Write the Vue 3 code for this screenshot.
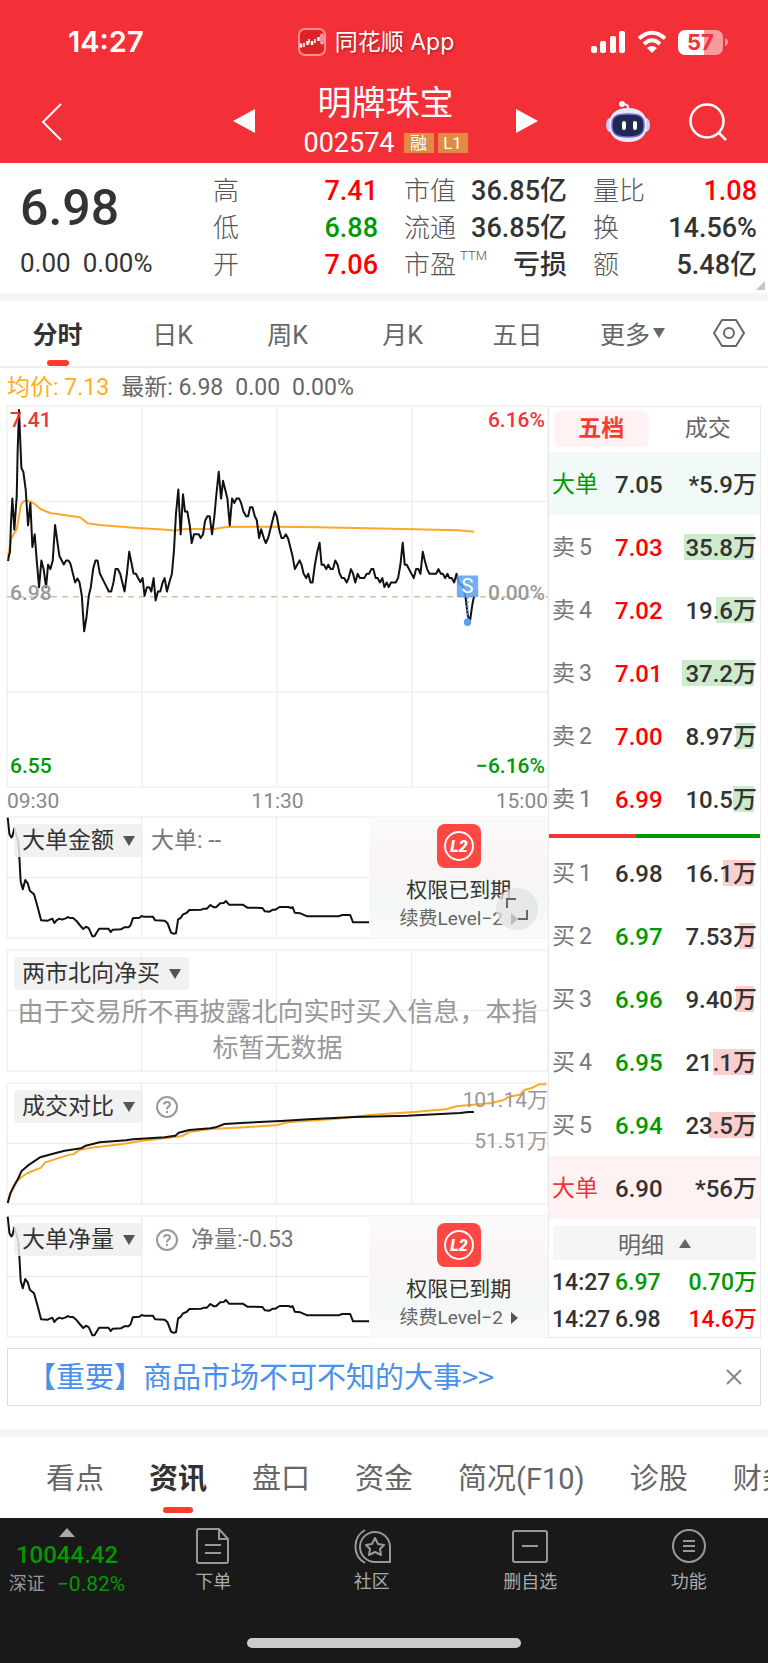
<script setup>
    import { ref } from 'vue'

    const stats = [
        [
            { label: '高', value: '7.41', tone: 'up' },
            { label: '低', value: '6.88', tone: 'down' },
            { label: '开', value: '7.06', tone: 'up' }
        ],
        [
            { label: '市值', value: '36.85亿' },
            { label: '流通', value: '36.85亿' },
            { label: '市盈', sup: 'TTM', value: '亏损' }
        ],
        [
            { label: '量比', value: '1.08', tone: 'up' },
            { label: '换', value: '14.56%' },
            { label: '额', value: '5.48亿' }
        ]
    ]

    const periods = ['分时', '日K', '周K', '月K', '五日']
    const activePeriod = ref('分时')

    // bar - ширина полосы объема в пикселях
    const sells = [
        { name: '卖', level: 5, price: '7.03', qty: '35.8万', bar: 70 },
        { name: '卖', level: 4, price: '7.02', qty: '19.6万', bar: 38 },
        { name: '卖', level: 3, price: '7.01', qty: '37.2万', bar: 72 },
        { name: '卖', level: 2, price: '7.00', qty: '8.97万', bar: 18 },
        { name: '卖', level: 1, price: '6.99', qty: '10.5万', bar: 21 }
    ]
    const buys = [
        { name: '买', level: 1, price: '6.98', qty: '16.1万', bar: 31, tone: 'flat' },
        { name: '买', level: 2, price: '6.97', qty: '7.53万', bar: 15, tone: 'down' },
        { name: '买', level: 3, price: '6.96', qty: '9.40万', bar: 18, tone: 'down' },
        { name: '买', level: 4, price: '6.95', qty: '21.1万', bar: 41, tone: 'down' },
        { name: '买', level: 5, price: '6.94', qty: '23.5万', bar: 45, tone: 'down' }
    ]
    const deals = [
        { time: '14:27', price: '6.97', priceTone: 'down', qty: '0.70万', qtyTone: 'down' },
        { time: '14:27', price: '6.98', priceTone: 'flat', qty: '14.6万', qtyTone: 'up' }
    ]

    const panels = [
        { id: 'amount', title: '大单金额', info: '大单: --', locked: true, expand: true },
        { id: 'north', title: '两市北向净买', empty: '由于交易所不再披露北向实时买入信息，本指标暂无数据' },
        { id: 'compare', title: '成交对比', help: true },
        { id: 'net', title: '大单净量', help: true, info: '净量:-0.53', locked: true }
    ]

    const sections = ['看点', '资讯', '盘口', '资金', '简况(F10)', '诊股', '财务']
    const activeSection = ref('资讯')
    const noticeOpen = ref(true)

    const priceLine = '24,482 27,465 30,455 33,365 37,295 43,388 50,290 53,150 57,30 64,203 70,215 77,268 84,375 91,308 97,440 104,402 110,480 117,560 124,480 131,508 138,560 144,493 151,506 158,480 165,374 172,425 178,467 191,492 198,480 205,480 211,490 225,546 232,534 238,545 245,585 252,692 259,650 266,585 272,560 279,505 286,480 292,480 299,519 312,545 326,573 333,573 340,545 346,506 353,506 360,520 373,573 380,520 387,454 400,519 407,520 420,545 427,533 433,586 440,560 447,560 453,573 460,533 466,600 473,573 480,573 487,546 493,533 500,573 507,546 515,519 521,450 527,340 534,268 541,402 548,282 554,334 561,334 568,374 574,428 581,402 595,402 601,413 608,402 614,362 621,348 628,348 635,402 642,348 648,282 655,215 662,295 668,242 681,295 688,375 695,295 702,308 708,295 716,295 722,308 729,334 737,348 743,348 749,321 756,321 763,348 769,360 776,413 782,387 790,413 796,428 803,413 823,334 829,348 836,388 843,413 849,413 856,402 863,415 876,467 883,506 897,480 903,493 909,519 917,533 923,520 930,546 936,546 943,493 950,455 957,427 963,493 970,493 977,506 983,493 990,506 997,506 1004,480 1011,493 1017,519 1024,533 1031,533 1038,546 1044,533 1051,506 1057,519 1064,546 1071,520 1078,533 1091,533 1098,520 1105,520 1112,506 1118,506 1125,533 1131,533 1138,546 1145,533 1151,560 1158,546 1164,560 1171,546 1185,546 1192,533 1199,493 1206,427 1212,493 1218,493 1239,533 1246,506 1253,506 1259,520 1266,454 1272,480 1279,506 1286,520 1306,520 1313,506 1320,520 1326,520 1333,533 1340,520 1346,533 1353,533 1360,546 1367,520 1373,546 1387,560 1394,590 1401,645 1407,665 1414,615 1420,585'
    const averageLine = '24,470 33,415 50,387 63,312 72,302 90,303 108,314 122,327 150,338 190,344 240,351 262,369 300,374 400,382 500,388 525,391 540,387 570,386 640,386 680,380 830,379 950,381 1100,384 1240,387 1370,390 1420,394'
    const bigOrderLine = '23,533 28,583 33,592 36,590 42,565 53,605 56,650 60,725 66,748 73,720 80,730 86,752 98,763 108,800 118,841 137,842 150,836 156,849 162,841 170,836 178,839 188,835 195,831 200,834 209,834 218,842 228,855 238,867 246,860 254,865 264,889 270,889 283,866 310,866 316,876 322,869 345,868 355,862 367,862 373,855 379,835 398,833 404,828 410,830 436,830 443,841 470,842 478,850 488,878 494,881 502,880 508,838 515,834 522,823 532,819 540,810 574,809 582,806 590,806 600,795 610,802 616,802 628,790 638,789 644,783 653,794 692,794 705,803 748,804 755,814 768,815 778,809 785,809 797,801 822,801 830,804 834,801 840,818 856,820 876,829 965,829 975,825 998,825 1006,847 1054,847'
    const todayVolume = '23,790 30,762 40,740 52,718 62,695 80,678 115,653 160,640 185,633 232,626 245,618 285,608 360,602 380,599 470,593 500,588 510,579 540,571 600,566 615,563 640,553 700,549 800,544 880,539 1010,532 1160,528 1310,520 1335,517 1350,517'
    const lastVolume = '23,790 32,760 50,725 62,712 80,700 118,684 130,668 165,656 200,645 210,644 228,630 260,624 350,613 400,604 500,592 522,588 540,577 600,568 700,563 790,556 820,548 960,537 1060,525 1180,517 1270,509 1300,500 1400,490 1435,481 1450,471 1480,465 1495,450 1515,445 1535,434 1556,434'
</script>

<template>
    <div class="page">
        <header class="header">
            <div class="status">
                <span class="clock">14:27</span>
                <span class="app-name">
                    <svg width="28" height="28" viewBox="0 0 28 28" fill="none" stroke="#fff">
                        <rect x="1" y="1" width="26" height="26" rx="6" fill="#dc2329" stroke="#ff8f8c" stroke-width="2" />
                        <path d="M3 15.500v4M9.500 13v4M14 13v4M20.500 9v4" stroke-width="2.500" />
                        <path d="M6 15v4M11 11v4M17 11v4" stroke-width="1.500" />
                        <rect x="23" y="6" width="2" height="10" rx="1" stroke-width="1" />
                    </svg>
                    同花顺 App
                </span>
                <span class="status-icons">
                    <svg width="35" height="24" viewBox="0 0 35 24" fill="#fff">
                        <rect x="0" y="16" width="6" height="7" rx="2" />
                        <rect x="9" y="11" width="6" height="12" rx="2" />
                        <rect x="19" y="6" width="6" height="17" rx="2" />
                        <rect x="28" y="1" width="6" height="22" rx="2" />
                    </svg>
                    <svg width="30" height="24" viewBox="0 0 30 24" fill="none" stroke="#fff" stroke-width="4">
                        <path d="M2 8.500Q15-3 28 8.500M7 14Q15 6.500 23 14" />
                        <path d="M10 18Q15 14 20 18L15 23Z" fill="#fff" stroke="none" />
                    </svg>
                    <span class="battery">57</span>
                    <svg width="3" height="8" viewBox="0 0 3 8" fill="#f99a9c"><path d="M0 0Q3 1 3 4T0 8Z" /></svg>
                </span>
            </div>
            <div class="title-bar">
                <button class="icon-btn back" aria-label="返回">
                    <svg width="22" height="38" viewBox="0 0 22 38" fill="none" stroke="#fff" stroke-width="2"><path d="M20 1L2 19L20 37" /></svg>
                </button>
                <div class="stock">
                    <button class="icon-btn" aria-label="上一只">
                        <svg width="22" height="24" viewBox="0 0 22 24" fill="#fff"><path d="M22 0V24L0 12Z" /></svg>
                    </button>
                    <div class="stock-name">
                        <h1>明牌珠宝</h1>
                        <div class="stock-code">
                            <span>002574</span>
                            <i class="badge">融</i>
                            <i class="badge">L1</i>
                        </div>
                    </div>
                    <button class="icon-btn" aria-label="下一只">
                        <svg width="22" height="24" viewBox="0 0 22 24" fill="#fff"><path d="M0 0V24L22 12Z" /></svg>
                    </button>
                </div>
                <div class="tools">
                    <button class="icon-btn" aria-label="助手">
                        <svg width="46" height="42" viewBox="0 0 46 42">
                            <path d="M23 8Q24 3 18 3" fill="none" stroke="#eef0fb" stroke-width="2" />
                            <circle cx="17" cy="3" r="3" fill="#f3f4fc" />
                            <ellipse cx="5" cy="24" rx="4" ry="7" fill="#c9d0f3" />
                            <ellipse cx="41" cy="24" rx="4" ry="7" fill="#c9d0f3" />
                            <path d="M23 7C36 7 42 14 42 24S36 41 23 41S4 34 4 24S10 7 23 7Z" fill="#e6e9f8" />
                            <path d="M23 13C36 13 39 16 39 24S36 36 23 36S7 32 7 24S10 13 23 13Z" fill="#20294d" stroke="#7a62e0" stroke-width="1.500" />
                            <rect x="17" y="20" width="4" height="9" rx="2" fill="#fff" />
                            <rect x="28" y="20" width="4" height="9" rx="2" fill="#fff" />
                        </svg>
                    </button>
                    <button class="icon-btn" aria-label="搜索">
                        <svg width="38" height="38" viewBox="0 0 38 38" fill="none" stroke="#fff" stroke-width="2.500"><circle cx="18" cy="18" r="16.500" /><path d="M30 30L37 37" /></svg>
                    </button>
                </div>
            </div>
        </header>

        <section class="quote">
            <div class="last">
                <strong>6.98</strong>
                <p><span>0.00</span><span>0.00%</span></p>
            </div>
            <dl v-for="(column, i) in stats" :key="i">
                <div v-for="item in column" :key="item.label">
                    <dt>{{ item.label }}<sup v-if="item.sup">{{ item.sup }}</sup></dt>
                    <dd :class="item.tone">{{ item.value }}</dd>
                </div>
            </dl>
            <svg class="corner" width="9" height="9" viewBox="0 0 9 9" fill="#c4c4c4"><path d="M9 0V9H0Z" /></svg>
        </section>

        <nav class="periods">
            <button v-for="name in periods" :key="name" :class="{ active: name === activePeriod }" @click="activePeriod = name">{{ name }}</button>
            <button>更多<svg width="12" height="10" viewBox="0 0 12 10" fill="#666"><path d="M0 0H12L6 10Z" /></svg></button>
            <button aria-label="设置">
                <svg width="32" height="28" viewBox="0 0 32 28" fill="none" stroke="#666" stroke-width="2"><path d="M9 1H23L31 14L23 27H9L1 14Z" stroke-linejoin="round" /><circle cx="16" cy="14" r="5" /></svg>
            </button>
        </nav>

        <p class="summary"><span class="avg">均价: 7.13</span><span>最新: 6.98</span><span>0.00</span><span>0.00%</span></p>

        <main class="board">
            <div class="charts">
                <div class="chart">
                    <svg viewBox="21 18 1620 1140" preserveAspectRatio="none" fill="none">
                        <path class="grid" d="M21 18H1641V1158H21ZM425 18V1158M830 18V1158M1234 18V1158M21 303H1641M21 874H1641" />
                        <path class="zero" d="M21 589H1641" />
                        <polyline class="line orange" :points="averageLine" />
                        <polyline class="line" :points="priceLine" />
                        <path class="sell-stem" d="M1400 590V660" />
                        <circle cx="1400" cy="665" r="11" fill="#5b9ff0" />
                        <rect x="1368" y="525" width="64" height="65" rx="3" fill="#5b9ff0" fill-opacity=".85" />
                        <text x="1400" y="578" text-anchor="middle" font-size="60" fill="#fff">S</text>
                    </svg>
                    <span class="mark top up">7.41</span>
                    <span class="mark top right up">6.16%</span>
                    <span class="mark middle">6.98</span>
                    <span class="mark middle right">0.00%</span>
                    <span class="mark bottom down">6.55</span>
                    <span class="mark bottom right down">−6.16%</span>
                </div>
                <div class="times"><span>09:30</span><span>11:30</span><span>15:00</span></div>

                <div class="panels">
                    <section v-for="panel in panels" :key="panel.id" class="panel">
                        <svg v-if="panel.id === 'compare'" class="plot" viewBox="21 430 1540 363" preserveAspectRatio="none" fill="none">
                            <path class="grid" d="M21 430H1561V793H21ZM404 430V793M788 430V793M1172 430V793M21 611H1561" />
                            <polyline class="line orange" :points="lastVolume" />
                            <polyline class="line" :points="todayVolume" />
                        </svg>
                        <svg v-else class="plot" viewBox="21 531 1540 363" preserveAspectRatio="none" fill="none">
                            <path class="grid" d="M21 531H1561V894H21ZM404 531V894M788 531V894M1172 531V894M21 712H1561" />
                            <polyline v-if="panel.locked" class="line" :points="bigOrderLine" />
                        </svg>
                        <div class="panel-head">
                            <button class="chip">{{ panel.title }}<svg width="12" height="10" viewBox="0 0 12 10" fill="#555"><path d="M0 0H12L6 10Z" /></svg></button>
                            <button v-if="panel.help" class="icon-btn" aria-label="说明">
                                <svg width="24" height="24" viewBox="0 0 24 24" fill="none" stroke="#999"><circle cx="12" cy="12" r="10" stroke-width="2" /><path d="M9 9.500Q9 7 12 7T15 9.500Q15 11 13 12Q12 12.500 12 14.500M12 16V18" stroke-width="2" /></svg>
                            </button>
                            <span v-if="panel.info">{{ panel.info }}</span>
                        </div>
                        <p v-if="panel.empty" class="empty">{{ panel.empty }}</p>
                        <template v-if="panel.id === 'compare'">
                            <span class="scale high">101.14万</span>
                            <span class="scale mid">51.51万</span>
                        </template>
                        <div v-if="panel.locked" class="locked">
                            <svg width="44" height="44" viewBox="0 0 44 44">
                                <rect width="44" height="44" rx="8" fill="#ff4743" />
                                <circle cx="22" cy="22" r="14" fill="none" stroke="#fff" stroke-width="2" />
                                <text x="22" y="28" text-anchor="middle" font-size="16" font-weight="900" font-style="italic" fill="#fff">L2</text>
                            </svg>
                            <b>权限已到期</b>
                            <a href="#">续费Level−2 <svg width="7" height="12" viewBox="0 0 7 12" fill="#555"><path d="M0 0L7 6L0 12Z" /></svg></a>
                        </div>
                        <button v-if="panel.expand" class="icon-btn expand" aria-label="展开">
                            <svg width="42" height="42" viewBox="0 0 42 42" fill="none" stroke="#666" stroke-width="2"><path d="M11 20V11H20M31 22V31H22" /></svg>
                        </button>
                    </section>
                </div>
            </div>

            <aside class="book">
                <div class="book-tabs">
                    <button class="active">五档</button>
                    <button>成交</button>
                </div>
                <table class="levels sell">
                    <tbody>
                        <tr class="big">
                            <th scope="row">大单</th>
                            <td>7.05</td>
                            <td>*5.9万</td>
                        </tr>
                        <tr v-for="row in sells" :key="row.level">
                            <th scope="row">{{ row.name }}<span>{{ row.level }}</span></th>
                            <td class="up">{{ row.price }}</td>
                            <td><i class="bar" :style="{ width: row.bar + 'px' }"></i><span>{{ row.qty }}</span></td>
                        </tr>
                    </tbody>
                </table>
                <div class="ratio"></div>
                <table class="levels buy">
                    <tbody>
                        <tr v-for="row in buys" :key="row.level">
                            <th scope="row">{{ row.name }}<span>{{ row.level }}</span></th>
                            <td :class="row.tone">{{ row.price }}</td>
                            <td><i class="bar" :style="{ width: row.bar + 'px' }"></i><span>{{ row.qty }}</span></td>
                        </tr>
                        <tr class="big">
                            <th scope="row">大单</th>
                            <td>6.90</td>
                            <td>*56万</td>
                        </tr>
                    </tbody>
                </table>
                <button class="detail">明细<svg width="12" height="9" viewBox="0 0 12 9" fill="#666"><path d="M6 0L12 9H0Z" /></svg></button>
                <table class="levels deals">
                    <tbody>
                        <tr v-for="deal in deals" :key="deal.price">
                            <th scope="row">{{ deal.time }}</th>
                            <td :class="deal.priceTone">{{ deal.price }}</td>
                            <td :class="deal.qtyTone">{{ deal.qty }}</td>
                        </tr>
                    </tbody>
                </table>
            </aside>
        </main>

        <div v-if="noticeOpen" class="notice">
            <a href="#">【重要】商品市场不可不知的大事&gt;&gt;</a>
            <button class="icon-btn" aria-label="关闭" @click="noticeOpen = false">
                <svg width="16" height="16" viewBox="0 0 16 16" stroke="#888" stroke-width="2"><path d="M1 1L15 15M15 1L1 15" /></svg>
            </button>
        </div>

        <nav class="sections">
            <button v-for="name in sections" :key="name" :class="{ active: name === activeSection }" @click="activeSection = name">{{ name }}</button>
        </nav>

        <footer class="footer">
            <div class="dock">
                <button class="index">
                    <svg width="16" height="9" viewBox="0 0 16 9" fill="#aaa"><path d="M8 0L16 9H0Z" /></svg>
                    <b>10044.42</b>
                    <span>深证<em>−0.82%</em></span>
                </button>
                <button>
                    <svg width="34" height="36" viewBox="0 0 34 36" fill="none" stroke="#999" stroke-width="2"><path d="M1 3Q1 1 3 1H23L32 11V33Q32 35 30 35H3Q1 35 1 33ZM23 1V11H32M9 17H25M9 25H25" /></svg>
                    下单
                </button>
                <button>
                    <svg width="38" height="36" viewBox="0 0 38 36" fill="none" stroke="#999" stroke-width="2"><path d="M37 34H22A15 15 0 1 1 37 19ZM12 2A19 19 0 0 0 12 35" /><path d="M22 10L25 16L31 17L27 21L28 27L22 24L16 27L17 21L13 17L19 16Z" stroke-linejoin="round" /></svg>
                    社区
                </button>
                <button>
                    <svg width="36" height="36" viewBox="0 0 36 36" fill="none" stroke="#999" stroke-width="2"><rect x="1" y="3" width="34" height="31" rx="2" /><path d="M10 18H26" /></svg>
                    删自选
                </button>
                <button>
                    <svg width="34" height="36" viewBox="0 0 34 36" fill="none" stroke="#999" stroke-width="2"><circle cx="17" cy="18" r="16" /><path d="M11 13H23M11 18H23M11 23H23" /></svg>
                    功能
                </button>
            </div>
            <div class="home"></div>
        </footer>
    </div>
</template>

<style>
    body {
        margin: 0;
        background: #fff;
    }
</style>

<style scoped>
    .page {
        overflow: hidden;
        font-family: Roboto, "Noto Sans CJK SC", sans-serif;
        font-size: 24px;
        color: #333;
    }
    .page * {
        box-sizing: border-box;
    }
    button {
        padding: 0;
        border: 0;
        background: none;
        font: inherit;
        color: inherit;
        cursor: pointer;
    }
    a {
        color: inherit;
        text-decoration: none;
    }
    svg {
        display: block;
        flex: none;
    }
    h1, p, dl, dd {
        margin: 0;
    }
    i, em {
        font-style: normal;
    }
    .icon-btn {
        display: flex;
    }
    .up {
        color: #f00;
    }
    .down {
        color: #009900;
    }

    .header {
        background: #f33038;
        color: #fff;
    }
    .status {
        display: grid;
        grid-template-columns: 1fr auto 1fr;
        align-items: center;
        height: 80px;
        padding: 4px 40px 0 24px;
    }
    .clock {
        padding-left: 44px;
        font: 600 29px/40px Inter, sans-serif;
    }
    .app-name {
        display: flex;
        gap: 9px;
        align-items: center;
        font-family: Inter, "Noto Sans CJK SC", sans-serif;
        font-size: 23px;
        line-height: 28px;
        text-shadow: 1px 1px 3px rgba(80, 0, 0, .5);
    }
    .status-icons {
        display: flex;
        gap: 11px;
        align-items: center;
        justify-content: flex-end;
    }
    .battery {
        width: 45px;
        height: 25px;
        margin-right: -9px;
        border-radius: 7px;
        background: linear-gradient(90deg, #fff 57%, #f99a9c 57%);
        font: 700 22px/25px Inter, sans-serif;
        text-align: center;
        color: #f33038;
    }
    .title-bar {
        display: grid;
        grid-template-columns: 1fr auto 1fr;
        height: 83px;
    }
    .back {
        align-items: center;
        padding-left: 41px;
    }
    .stock {
        display: flex;
        gap: 48px;
        align-items: center;
        padding: 0 0 1px 3px;
    }
    .stock-name {
        display: flex;
        flex-direction: column;
        align-items: center;
    }
    h1 {
        font-size: 34px;
        font-weight: 400;
        line-height: 44px;
    }
    .stock-code {
        display: flex;
        gap: 4px;
        align-items: center;
        font-size: 27px;
        line-height: 36px;
    }
    .stock-code span {
        margin-right: 5px;
    }
    .badge {
        width: 30px;
        background: #e08b42;
        font-size: 17px;
        line-height: 20px;
        text-align: center;
    }
    .tools {
        display: flex;
        gap: 38px;
        align-items: center;
        justify-content: flex-end;
        padding-right: 41px;
    }

    .quote {
        position: relative;
        display: grid;
        grid-template-columns: 167fr 165fr 163fr 164fr;
        column-gap: 26px;
        height: 138px;
        padding: 10px 11px 0 20px;
        border-bottom: 8px solid #f5f5f5;
    }
    .last strong {
        display: block;
        font-size: 50px;
        font-weight: 500;
        line-height: 70px;
    }
    .last p {
        display: flex;
        gap: 12px;
        font-size: 26px;
        line-height: 40px;
    }
    .quote dl div {
        display: flex;
        justify-content: space-between;
        height: 37px;
        line-height: 37px;
    }
    .quote dt {
        font-size: 26px;
        font-weight: 300;
        color: #555;
    }
    .quote dd {
        font-size: 27px;
        font-weight: 500;
    }
    .quote sup {
        margin-left: 4px;
        font-size: 13px;
        line-height: 13px;
        vertical-align: 14px;
    }
    .corner {
        position: absolute;
        right: 3px;
        bottom: 3px;
    }

    .periods {
        display: grid;
        grid-template-columns: repeat(6, 115fr) 78fr;
        height: 67px;
        border-bottom: 2px solid #eee;
        font-size: 25px;
        color: #666;
    }
    .periods button {
        position: relative;
        display: flex;
        gap: 3px;
        align-items: center;
        justify-content: center;
        padding-bottom: 2px;
    }
    .periods .active, .sections .active {
        font-weight: 700;
        color: #333;
    }
    .periods .active::after, .sections .active::after {
        content: "";
        position: absolute;
        left: 50%;
        bottom: 0;
        width: 22px;
        height: 6px;
        border-radius: 3px;
        background: #ff3b30;
        transform: translateX(-50%);
    }
    .summary {
        display: flex;
        gap: 12px;
        height: 38px;
        padding-left: 7px;
        font-size: 23px;
        line-height: 40px;
        color: #666;
    }
    .avg {
        color: #fdad18;
    }

    .board {
        display: grid;
        grid-template-columns: 541fr 213fr;
        padding: 0 7px;
    }
    .chart {
        position: relative;
    }
    .chart > svg {
        width: 100%;
        height: 381px;
        overflow: visible;
    }
    .grid {
        stroke: #e9e9e9;
        stroke-width: 1px;
        vector-effect: non-scaling-stroke;
    }
    .zero {
        stroke: #c9a06c;
        stroke-width: 1px;
        stroke-dasharray: 6px 5px;
        vector-effect: non-scaling-stroke;
    }
    .line {
        stroke: #111;
        stroke-width: 2px;
        stroke-linejoin: round;
        vector-effect: non-scaling-stroke;
    }
    .orange {
        stroke: #ffa726;
    }
    .sell-stem {
        stroke: #5b9ff0;
        stroke-width: 2px;
        stroke-dasharray: 2px 2px;
        vector-effect: non-scaling-stroke;
    }
    .mark {
        position: absolute;
        left: 3px;
        font-size: 21px;
        font-weight: 500;
        line-height: 24px;
    }
    .mark.right {
        right: 3px;
        left: auto;
    }
    .mark.top {
        top: 2px;
        color: #f03438;
    }
    .mark.middle {
        top: 175px;
        color: #999;
    }
    .mark.bottom {
        bottom: 9px;
    }
    .times {
        display: flex;
        justify-content: space-between;
        height: 30px;
        font-size: 21px;
        line-height: 28px;
        color: #888;
    }
    .panels {
        display: flex;
        flex-direction: column;
        gap: 12px;
    }
    .panel {
        position: relative;
        height: 121px;
    }
    .plot {
        position: absolute;
        width: 100%;
        height: 100%;
        overflow: visible;
    }
    .panel-head {
        position: relative;
        display: flex;
        gap: 8px;
        align-items: center;
        padding: 7px 7px 0;
        font-size: 23px;
        line-height: 32px;
        color: #777;
    }
    .panel-head .icon-btn {
        margin-left: 4px;
        margin-right: 4px;
    }
    .chip {
        display: flex;
        gap: 9px;
        align-items: center;
        height: 33px;
        padding: 0 8px;
        border-radius: 4px;
        background: rgba(238, 238, 238, .85);
        color: #333;
    }
    .empty {
        position: relative;
        padding: 4px 10px 0;
        font-size: 26px;
        line-height: 36px;
        text-align: center;
        color: #999;
    }
    .scale {
        position: absolute;
        right: 0;
        font-size: 21px;
        line-height: 24px;
        color: #999;
    }
    .scale.high {
        top: 5px;
    }
    .scale.mid {
        top: 46px;
    }
    .locked {
        position: absolute;
        top: 0;
        right: 0;
        bottom: 0;
        display: flex;
        flex-direction: column;
        align-items: center;
        width: 33%;
        padding-top: 7px;
        background: linear-gradient(180deg, #fafafa, #fbf5f5 40%, #f3f7f6 65%, #fafafa);
    }
    .locked b {
        margin-top: 7px;
        font-size: 21px;
        font-weight: 400;
        line-height: 30px;
    }
    .locked a {
        display: flex;
        gap: 8px;
        align-items: center;
        font-size: 19px;
        line-height: 28px;
        color: #666;
    }
    .expand {
        position: absolute;
        right: 10px;
        bottom: 8px;
        border-radius: 50%;
        background: rgba(225, 225, 225, .75);
    }

    .book {
        border: 1px solid #e9e9e9;
    }
    .book-tabs {
        display: grid;
        grid-template-columns: 1fr 1fr;
        gap: 12px;
        height: 45px;
        padding: 4px 5px 5px;
        font-size: 23px;
        line-height: 36px;
        color: #666;
    }
    .book-tabs .active {
        border-radius: 6px;
        background: #fff2f2;
        font-weight: 700;
        color: #ff3b30;
    }
    .levels {
        width: 100%;
        border-collapse: collapse;
        table-layout: fixed;
        font-size: 24px;
        font-weight: 500;
        line-height: 28px;
    }
    .levels tr {
        height: 63px;
    }
    .levels th {
        width: 66px;
        padding: 2px 0 0 3px;
        font-size: 23px;
        font-weight: 400;
        text-align: left;
        color: #777;
    }
    .levels th span {
        margin-left: 4px;
    }
    .levels td {
        position: relative;
        width: 50px;
        padding: 2px 0 0;
    }
    .levels td:last-child {
        width: auto;
        padding-right: 3px;
        text-align: right;
    }
    .levels td span {
        position: relative;
    }
    .bar {
        position: absolute;
        top: 50%;
        right: 6px;
        height: 26px;
        margin-top: -13px;
        background: #ccebcc;
    }
    .buy .bar {
        background: #fccfcf;
    }
    .sell .big {
        background: #f1faf6;
    }
    .sell .big th {
        color: #009900;
    }
    .buy .big {
        background: #fff2f2;
    }
    .buy .big th {
        color: #f03438;
    }
    .ratio {
        height: 4px;
        margin: 4px 0 3px;
        background: linear-gradient(90deg, #f03438 41%, #009900 41%);
    }
    .detail {
        display: flex;
        gap: 15px;
        align-items: center;
        justify-content: center;
        width: calc(100% - 8px);
        height: 34px;
        margin: 7px 4px 3px;
        background: #f5f5f5;
        font-size: 23px;
        color: #666;
    }
    .levels.deals {
        font-size: 23px;
    }
    .deals tr {
        height: 37px;
    }
    .deals th {
        font-weight: 500;
        color: #333;
    }

    .notice {
        display: flex;
        align-items: center;
        justify-content: space-between;
        height: 58px;
        margin: 10px 7px 23px;
        padding: 0 18px 0 19px;
        border: 1px solid #ddd;
        font-family: "Noto Sans CJK SC", sans-serif;
        font-size: 29px;
        color: #4a90ec;
    }
    .notice a {
        padding-bottom: 4px;
    }
    .sections {
        display: flex;
        gap: 45px;
        height: 89px;
        padding-left: 46px;
        border-top: 8px solid #f5f5f5;
        font-size: 29px;
        white-space: nowrap;
        color: #666;
    }
    .sections button {
        position: relative;
        flex: none;
        padding-bottom: 4px;
    }
    .sections .active::after {
        bottom: 5px;
        width: 30px;
    }

    .footer {
        padding-bottom: 16px;
        background: #191919;
        color: #aaa;
    }
    .dock {
        display: grid;
        grid-template-columns: 134px repeat(4, 1fr);
        height: 120px;
        padding-top: 10px;
    }
    .dock button {
        display: flex;
        flex-direction: column;
        gap: 5px;
        align-items: center;
        font-size: 18px;
        line-height: 26px;
    }
    .dock .index {
        gap: 0;
    }
    .index b {
        margin-top: 5px;
        font-size: 24px;
        font-weight: 500;
        color: #009900;
    }
    .index span {
        display: flex;
        gap: 12px;
        margin-top: 3px;
        color: #999;
    }
    .index em {
        font-size: 21px;
        color: #009900;
    }
    .home {
        width: 274px;
        height: 10px;
        margin: 0 auto;
        border-radius: 5px;
        background: #ccc;
    }
</style>
